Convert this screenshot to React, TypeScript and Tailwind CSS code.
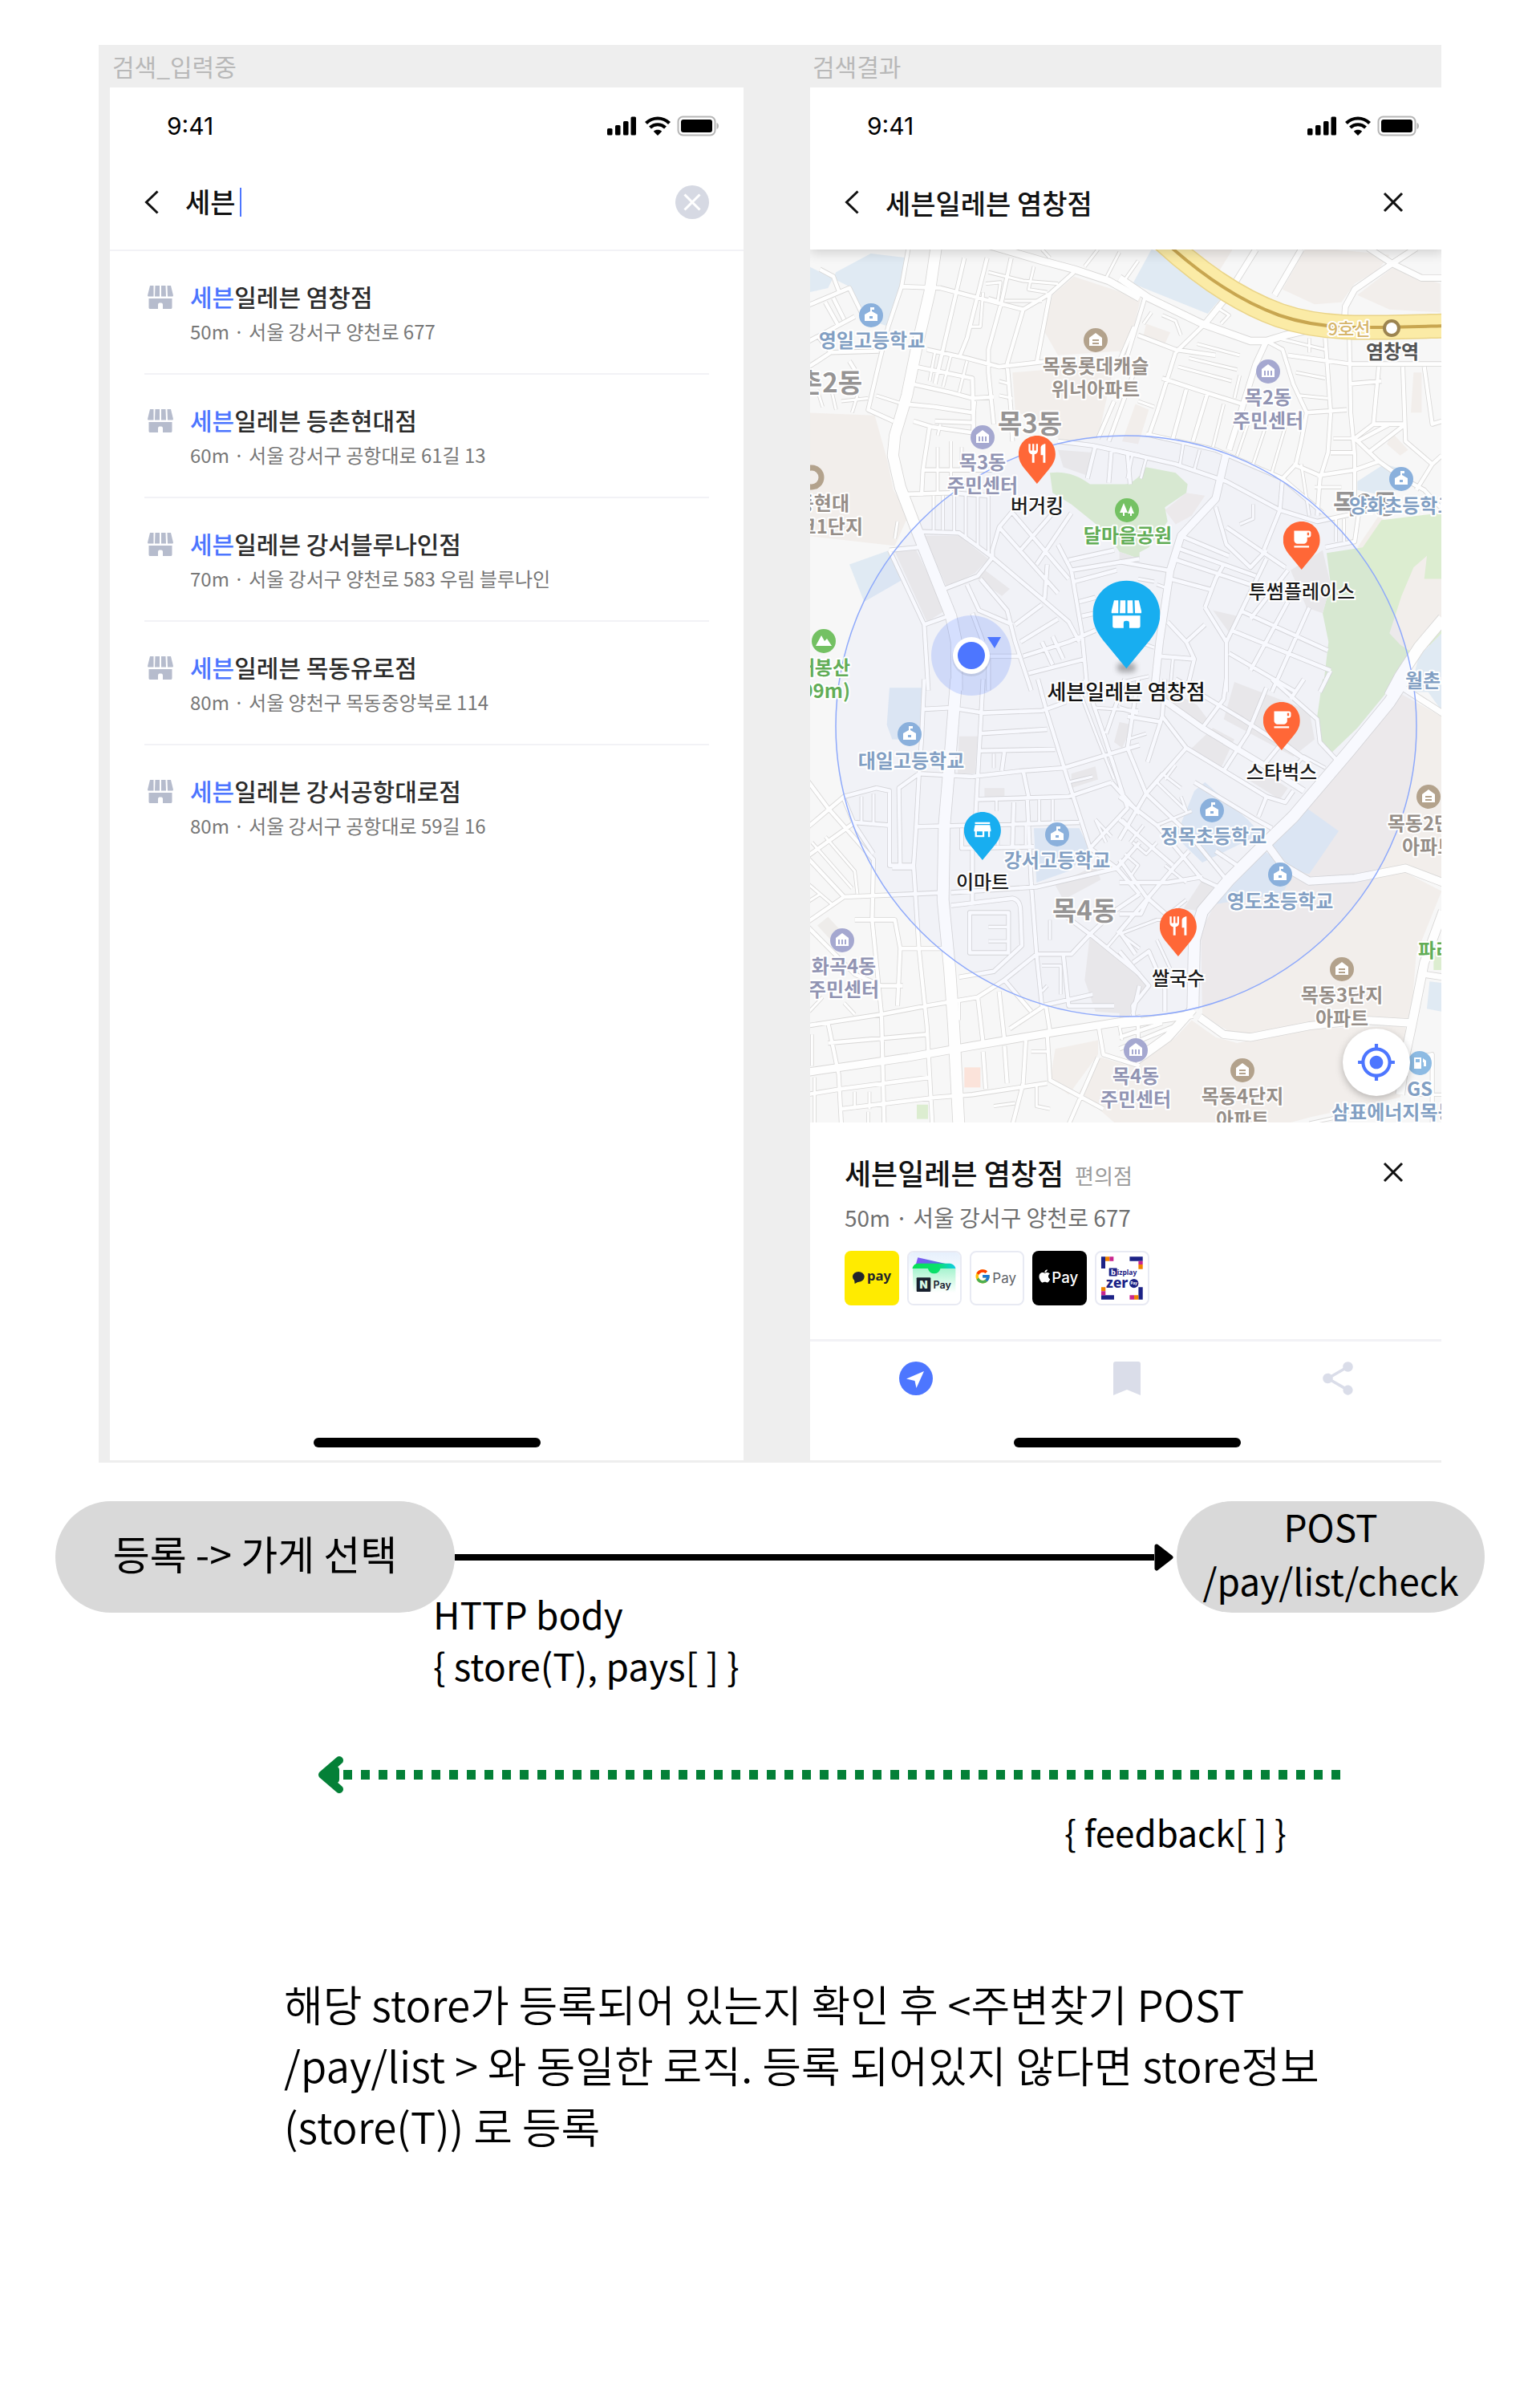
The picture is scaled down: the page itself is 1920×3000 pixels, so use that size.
import type { ReactNode } from "react";
import { FaApple } from "react-icons/fa";
import { FcGoogle } from "react-icons/fc";
import { MdLocalCafe, MdMyLocation, MdRestaurant, MdShare, MdStore } from "react-icons/md";

/* ---------- small icons ---------- */

function ShopIcon({ className }: { className: string }) {
  return (
    <svg viewBox="0 0 32 29" className={className} fill="currentColor" aria-hidden="true">
      <path d="M3 0h4.500v13.500H1c-1 0-1-1-.8-2zM9.500 0h5.500v13.500H9zM17 0h5.500l.5 13.500H17zM24.500 0H29l2.800 11.500c.2 1 .2 2-.8 2h-6z" />
      <path d="M1.500 16h29v11c0 1.500-.5 2-2 2H19v-5c0-2-1-2.500-3-2.500s-3 .5-3 2.500v5H3.500c-1.500 0-2-.5-2-2z" />
    </svg>
  );
}

function BackIcon() {
  return (
    <svg viewBox="0 0 18 30" className="h-[30px] w-[18px]" fill="none" stroke="#111" strokeWidth="3" aria-hidden="true">
      <path d="M16.500 1.500 2.500 15l14 13.500" />
    </svg>
  );
}

function CloseIcon() {
  return (
    <svg viewBox="0 0 26 26" className="h-[26px] w-[26px]" fill="none" stroke="#111" strokeWidth="3" aria-hidden="true">
      <path d="M2 2l22 22M24 2 2 24" />
    </svg>
  );
}

function StatusBar() {
  return (
    <div className="flex h-24 items-center justify-between pl-[71px] pr-[31px]">
      <span className="font-['Inter',sans-serif] text-[30px] font-normal leading-none text-black">9:41</span>
      <svg viewBox="0 0 140 26" className="h-[26px] w-[140px]" aria-hidden="true">
        <g fill="#000">
          <rect x="1" y="16" width="6.500" height="8.500" rx="1.500" />
          <rect x="11" y="12" width="6.500" height="12.500" rx="1.500" />
          <rect x="21" y="7" width="6.500" height="17.500" rx="1.500" />
          <rect x="30.500" y="1.500" width="6.500" height="23" rx="1.500" />
          <path d="M64 25l-5.200-5.300c2.900-2.500 7.500-2.500 10.400 0z" />
        </g>
        <g fill="none" stroke="#000" strokeWidth="4.200">
          <path d="M49.500 9.500c8.200-8 20.800-8 29 0" />
          <path d="M54.500 15c5.500-5 13.500-5 19 0" />
        </g>
        <rect x="89.500" y="1.500" width="46" height="23" rx="6" fill="none" stroke="#b5b5b5" strokeWidth="2" />
        <rect x="93" y="5" width="39" height="16" rx="3" fill="#000" />
        <path d="M137.500 9c2 1 2.500 2.500 2.500 4s-.5 3-2.500 4z" fill="#b5b5b5" />
      </svg>
    </div>
  );
}

function HomeIndicator() {
  return (
    <div className="mt-auto pb-4 pt-7">
      <div className="mx-auto h-3 w-[283px] rounded-full bg-black" />
    </div>
  );
}

/* ---------- search list ---------- */

const results = [
  { rest: "일레븐 염창점", info: "50m · 서울 강서구 양천로 677" },
  { rest: "일레븐 등촌현대점", info: "60m · 서울 강서구 공항대로 61길 13" },
  { rest: "일레븐 강서블루나인점", info: "70m · 서울 강서구 양천로 583 우림 블루나인" },
  { rest: "일레븐 목동유로점", info: "80m · 서울 양천구 목동중앙북로 114" },
  { rest: "일레븐 강서공항대로점", info: "80m · 서울 강서구 공항대로 59길 16" },
];

function SearchScreen() {
  return (
    <section className="flex flex-1 flex-col bg-white">
      <header className="border-b-2 border-[#f2f2f6] pb-3">
        <StatusBar />
        <form className="flex h-[94px] items-center px-[43px]" onSubmit={(e) => e.preventDefault()}>
          <button type="button" aria-label="뒤로" className="mr-[33px]">
            <BackIcon />
          </button>
          <input
            aria-label="가게 검색"
            defaultValue="세븐"
            className="w-[68px] bg-transparent p-0 pb-1 text-[34px] font-medium text-[#111] outline-none"
          />
          <span className="h-9 w-[2px] bg-[#4d76ff]" />
          <button type="reset" aria-label="지우기" className="ml-auto">
            <svg viewBox="0 0 42 42" className="h-[42px] w-[42px]" aria-hidden="true">
              <circle cx="21" cy="21" r="21" fill="#d6d9e3" />
              <path d="M11.500 11.500l19 19M30.500 11.500l-19 19" stroke="#fff" strokeWidth="3" />
            </svg>
          </button>
        </form>
      </header>
      <ul className="px-[43px]">
        {results.map((r) => (
          <li key={r.rest} className="border-b-2 border-[#f2f2f6] last:border-b-0">
            <a href="#store" className="flex gap-[21px] pb-[34px] pl-1 pt-[34px]">
              <ShopIcon className="mt-[9px] h-[29px] w-8 text-[#b6bccd]" />
              <span className="flex flex-col gap-1">
                <span className="text-[30px] font-medium leading-[44px] text-[#2b2b2b]">
                  <span className="text-[#4d76ff]">세븐</span>
                  {r.rest}
                </span>
                <span className="text-[24px] leading-9 text-[#777]">{r.info}</span>
              </span>
            </a>
          </li>
        ))}
      </ul>
      <HomeIndicator />
    </section>
  );
}

/* ---------- map ---------- */

type Tile = {
  x: number;
  y: number;
  areas: { fill: string; d: string }[];
  roads: { w: number; d: string }[];
};

const BLUE = "#e0eaf3";
const SAND = "#f2eeeb";
const GREEN = "#dcedd0";
const STONE = "#eeecea";

const tiles: Tile[] = [
  {
    x: -11,
    y: -11,
    areas: [
      { fill: BLUE, d: "M30 90L30 180 100 165 130 110 260 45 400 60 330 300 230 270 180 160z" },
      { fill: SAND, d: "M1020 125L940 190 905 310 960 400 1200 385 1265 200z" },
      { fill: SAND, d: "M790 460L1170 430 1110 690 980 700 800 590z" },
      { fill: SAND, d: "M20 600L275 610 320 760 345 870 400 960 350 1065 20 1030z" },
      { fill: STONE, d: "M460 1030L590 1030 700 1110 650 1160 545 1210z" },
      { fill: BLUE, d: "M180 1130L330 1080 375 1185 235 1260z" },
      { fill: STONE, d: "M350 1085L430 1080 540 1290 470 1330z" },
      { fill: GREEN, d: "M930 810Q1010 800 1080 850L1265 850 1265 1110 1190 1085 1130 1010 1010 920 940 880z" },
      { fill: STONE, d: "M680 1145l100 70-30 25-90-60zM960 730l140 10-30 80-90-30zM1260 1110l-70-25 0 40z" },
    ],
    roads: [
      { w: 40, d: "M505 20L480 180 430 380 395 540 350 680 343 750 370 860 440 1030 500 1170 560 1310 580 1400 582 1570" },
      { w: 24, d: "M680 10L900 70 1020 100 1150 140 1265 200" },
      {
        w: 13,
        d: "M400 30L375 160 325 300 290 430 250 590 345 630M375 160L520 165 830 240 930 185 1020 110M20 228L180 165 235 270M70 100L120 125 140 175M20 355L200 265M90 215L135 290M120 200L160 275M20 445L110 390 290 385M110 390L60 330M180 420L200 450M610 60L580 180 525 400 500 500M695 60L620 340 590 410M785 60L750 210 700 380 700 460 720 640M470 380L620 410 740 440 930 420M830 240L770 430 785 600 790 700M930 185L880 430M430 440L640 480 645 670M415 500L560 530 640 550 720 545M390 570L500 580 640 600M500 630L640 635M420 630L490 650 640 670M480 650L455 800 450 890M455 800L740 800M380 885L560 880 700 890M430 1015L590 1020 650 1060 715 1105 660 1170 535 1215M715 1105L900 1250 1000 1330 1040 1400M715 1105V1080L740 1000 830 900M740 1000L960 1230M790 950L1000 1180M820 1080L960 930M880 1130L1010 950M960 1060L1010 1150 1050 1370 1070 1570M1010 1150L1265 1110M1000 1115L1170 1080M1020 1190L1180 1150M920 1130L910 1250M1040 1260L1100 1245M1050 1310L1100 1300M620 1200L665 1290 790 1340M670 1180L770 1290 800 1400 860 1570M330 1080L460 1340 475 1570M330 1080L440 1070M460 1340L550 1310M800 1340L900 1270M820 1400L960 1320M830 1450L1000 1400 1100 1360M850 1510L1060 1460M900 1400L940 1480M940 1380L980 1460M650 1450L820 1450M700 1450V1570M640 1300L680 1400M960 700L1090 715 1265 750M1100 715L1070 830M1160 730L1150 845M1220 740L1230 850M1245 300L1190 420M1240 470L1150 700M1170 560L1110 690",
      },
      {
        w: 9,
        d: "M700 110L830 140 960 150M690 150L745 145 735 210 700 200M680 180L670 300 635 300M870 90L850 170 920 180M760 210L900 210M560 400L530 510M500 390L480 490M620 420L590 530M510 720V880M560 700V880M600 720V800M495 890V1010M530 890V1010M572 890V1020M615 890V1040M660 890V1070M700 890V1090M740 490L780 500M740 540L790 550M60 520L80 580M110 510L130 590M150 560L250 550M190 600L210 540M280 540L380 570M650 560L640 670M520 640L510 680M360 980L350 1040M930 60L900 30M1060 90L1110 30M1140 130L1190 40M1200 150L1260 70M640 740L620 790",
      },
    ],
  },
  {
    x: 389,
    y: -11,
    areas: [
      { fill: BLUE, d: "M110 30L200 60 380 190 320 255 40 150z" },
      { fill: SAND, d: "M250 20L420 20 360 110zM690 20L1000 50 960 100 870 150 820 215 720 222 600 170zM1010 95L1190 150 1190 250 1000 240 880 190zM0 140L70 200 20 390 -10 390z" },
      { fill: SAND, d: "M90 290l90 30-20 40-80-30zM50 570l50 20-40 120-60-10zM160 940L240 880 310 890 260 960 200 990zM1090 460h30v140h-40zM1010 670l60 60-30 20-50-40zM880 1070l80-110 40 30-80 90z" },
      { fill: GREEN, d: "M-10 855Q50 850 90 790L200 810 245 850 240 880 160 930 170 980 100 1070 40 1100 -10 1085z" },
      { fill: GREEN, d: "M970 975L1195 950V1400L1080 1430 990 1575H750L772 1400 750 1300 780 1200 765 1090 900 1070z" },
      { fill: SAND, d: "M1140 1100L1130 1180 1195 1180V1340L1090 1440 1040 1410 1000 1370 1045 1240 1090 1140z" },
      { fill: BLUE, d: "M880 840L980 780 1060 800 1050 860 980 890 880 870zM1195 1370V1575H1075L1110 1450z" },
      { fill: STONE, d: "M630 1150L750 1080 780 1200 750 1300 690 1280zM340 1290l90 20-20 70z" },
    ],
    roads: [
      { w: 24, d: "M-10 130L100 200 300 290 480 350 540 350 610 330 700 310" },
      { w: 20, d: "M310 290L380 210 500 30M570 190L670 30M1195 130L1120 130 1010 80 920 25M1010 80L870 170 835 230 832 270M1010 80L1100 25M540 350L500 430 400 730" },
      { w: 26, d: "M390 740L350 900 220 1030 180 1150 140 1400 120 1575" },
      { w: 40, d: "M1200 1320L1110 1420 1040 1520 1000 1590" },
      {
        w: 13,
        d: "M85 200L20 400M540 350L600 380 640 500 690 600 670 700 650 780 600 830M760 340L780 600 770 740 740 830 730 960M850 340L855 600 870 750 870 930M620 400L850 430 1195 430M850 500L970 490M690 600L840 590M960 440L940 640 870 690M1050 440L1060 700 1160 780 1195 750M1130 440L1160 640 1195 630M940 640L1060 640M870 690L960 770 1050 830 1130 870 1190 930M780 740L870 740M60 330L200 380 350 400M200 390L310 290M200 390L130 600 100 680M150 480L280 520 450 570M240 520L190 690M320 530L265 700M90 675L350 730 600 830 750 950M-10 735L200 780 390 840 590 940 730 980 880 950M600 830L590 940 530 1080M350 930L390 1060 480 1140 540 1080M390 1000L610 1140M220 1030L400 1100M190 1110L480 1200M200 1070L500 1170M310 1280L350 1180 380 1130M180 1180L340 1220M540 1110L390 1400M620 1150L480 1320M310 1280L390 1400 390 1575M440 1290L770 1430M410 1360L780 1500M400 1440L650 1575M700 1280L560 1575M620 1260L480 1500M780 1500L740 1575M170 1330L240 1400 310 1340M240 1400L270 1460 240 1575M140 1450L270 1460M-10 1120L170 1150M730 820L870 800 960 770M640 780L740 820M760 1070L870 1050 885 950M1000 640L880 700M1060 640L920 740M1160 780L1100 870",
      },
      {
        w: 9,
        d: "M150 260L200 280 220 330M110 250L80 290M350 230L400 260 370 290M280 360L440 400M250 410L430 450M210 440L410 490M650 460L760 480M660 540L770 550M700 340V390M790 690L860 690M40 740L20 830M90 760L70 830M230 700L215 790M290 730L270 800M470 640L430 750M540 640L490 780M610 650L560 810M670 780L700 960M720 860L820 860M440 470L420 550M60 560L120 580M380 570L340 720M490 920L490 970 440 990M800 970V1050M830 970V1050M130 1200L160 1210M60 1180L120 1190M130 1470V1560M190 1460L180 1560M580 340L760 380M60 1400L120 1420M0 1540L100 1520",
      },
    ],
  },
  {
    x: -11,
    y: 539,
    areas: [
      { fill: BLUE, d: "M330 20L450 20 455 200 340 200 320 150zM870 510L1040 510 1080 590 1000 660 880 700z" },
      { fill: STONE, d: "M590 190h70l-10 130h-65zM685 370h75v35h-75zM950 710L1100 640 1120 690 980 760zM1080 880L1140 930 1265 1020 1250 1160 1100 1150 1060 1040zM1010 320l90-25 10 45-100 30zM60 850l40-30 50 50-30 40zM1190 140l50 10-40 80-30-20z" },
      { fill: SAND, d: "M950 1280L1110 1250 1110 1300 1000 1440 930 1390zM1120 1310L1265 1350V1545H1180L1040 1430z" },
      { fill: "#fbe3da", d: "M610 1345h60v70h-60z" },
      { fill: GREEN, d: "M432 1475h42v50h-42z" },
    ],
    roads: [
      { w: 42, d: "M580 -10L555 280 535 500 530 760 555 1000 570 1200 590 1560" },
      { w: 26, d: "M20 1362L400 1310 640 1270 960 1220 1270 1175" },
      {
        w: 13,
        d: "M460 95L560 90 680 108 900 100 990 70M460 -10L450 200 440 330 430 500 420 640 440 930 470 1200 490 1545M680 -10L660 330 650 500M670 180L920 165M670 240L950 235M440 320L640 330 830 310 980 300 1265 220M885 -10L920 110 1000 350 1080 580 1180 650 1265 740M760 240L750 310M830 310L850 400M650 410L1000 400 1160 350M795 420L790 570M845 400L860 700 880 950 900 1130M650 500L1040 490M430 505L650 500M600 510V580L870 575M640 580L640 780M560 735L880 715 950 700 1180 650 1265 560M560 780L790 755Q820 760 820 800L825 920 720 1010 590 1030M630 805H775V945H630zM880 950L1010 950 1080 880 1170 800 1265 740M950 790L1080 880 1265 1020M1080 580L1220 440 1130 180 1060 -10M1210 -10L1140 180M1160 350L1265 460M880 950L760 1040 660 1100 470 1130 300 1160 20 1200M760 1040L860 1150M740 1080L760 1250M660 1100L680 1260M900 1130L1090 1090M910 1130L780 1210M915 1130L930 1220M980 950L1000 1130 1170 1130M20 840L160 750 420 740 530 735M160 750L20 610M20 510L160 400 280 370 330 380V640H420M370 640L365 370 440 320M20 340L100 440 270 620 265 830 300 1160 310 1545M20 610L200 490 330 500M160 410L200 500 270 600M200 830L350 830 370 930 530 930M20 850L200 1020 300 1060 380 1060M370 930L360 1130M100 1190L140 1370 150 1545M100 1260L470 1230M150 1420L480 1380M150 1490L500 1450 640 1440 920 1400M20 1440L150 1420M680 1290L690 1420M760 1270L770 1400M840 1250L830 1400 790 1545M920 1230L930 1390 1130 1490M1110 1190L1130 1300 1265 1340M1110 1310L1000 1545M1265 1060L1240 1160",
      },
      {
        w: 9,
        d: "M225 400V490M270 390V490M720 250V300M890 410V490M940 410V490M730 410V450M735 500V570M700 855H770M700 905H770M40 560L190 720M90 540L200 660 210 740M20 700L120 780M20 770L70 740M340 650H420M840 500V570M1000 350L1090 330M1100 90L1260 100M1040 30L1110 200 1170 340M1100 480L1160 540M1140 560L1100 480M1200 480L1265 540M900 990H970V1090M920 1060L900 1080M590 1110V1180M40 1230V1340M30 1150L80 1100M50 1380V1540M200 1430V1490M255 1430V1490M250 1500V1540M880 1400V1480L930 1490M1190 1200L1200 1250M720 1480L800 1470M930 830V900M1180 870L1265 930M1230 830L1140 930M860 1290H920M160 1120L200 1160",
      },
    ],
  },
  {
    x: 389,
    y: 539,
    areas: [
      { fill: GREEN, d: "M750 -10H1030L880 160 780 250 740 200 728 130zM1165 940L1195 900V1005H1165zM1190 820v60z" },
      { fill: SAND, d: "M1040 40L1195 120V690L1060 650 870 680 720 700 640 660 550 560z" },
      { fill: SAND, d: "M520 580L600 640 720 710 1060 665 1195 730 1100 950 1080 1180 900 1190 700 1190 480 1240 400 1220 300 1160 295 870 350 770z" },
      { fill: SAND, d: "M260 1180L350 1240 430 1260 700 1210 1060 1200V1320L1040 1450 700 1520 600 1545H-10L60 1330 200 1240z" },
      { fill: BLUE, d: "M550 560L690 440 810 520 700 670 640 660zM520 580L640 665 600 740 350 775 400 690zM270 380L310 350 470 480 520 530 300 630 200 540zM1110 -10H1195V100zM1150 1045L1195 1050V1150L1140 1140z" },
      { fill: STONE, d: "M160 20L280 80 320 130 300 150 150 60zM340 160L420 200 370 300 250 240zM420 0L700 100 720 200 640 260 380 130zM490 290L620 370 590 410 470 340zM300 690L350 720 290 800 230 790zM-10 960L100 1060 30 1120 30 1180H-10z" },
    ],
    roads: [
      { w: 42, d: "M1070 -30L1000 70 850 240 640 470 540 560 400 690 300 800 270 900 265 1140" },
      { w: 26, d: "M545 570L600 640 700 695 870 685 1060 650 1200 700M290 1170L380 1230 480 1240 700 1200 900 1180 1080 1190M-10 1195L120 1180 265 1160" },
      { w: 32, d: "M1200 800L1130 980 1085 1190 1060 1300 1040 1440M265 1140L170 1240 50 1320" },
      { w: 20, d: "M1050 20L1200 110M1130 1020L1200 1030M150 60L300 160 530 290 680 380" },
      {
        w: 13,
        d: "M60 -10L20 230 90 390M160 -10L150 120 95 280M150 120L240 230 90 390M300 160L380 60 390 -10M380 310L470 180 540 20M240 230L540 400 510 470M200 -10L450 130 700 280M560 -10L730 130 740 210 800 270M630 60L680 -10M90 390L-10 550M90 390L250 530 390 690M-10 400L130 500 300 690 370 720M-10 480L190 640M270 350L500 480 560 510M100 750L200 640 250 590M-10 620L90 750 200 840M-10 700L170 700 300 680M-10 810H70L100 750M100 750L-10 870 50 950M40 980L100 940 160 1070V1150M-10 940L100 1060 40 1130 45 1190M350 590L430 640M20 120L150 140M-10 90L60 110M530 290L600 210 700 280M540 400L610 420 640 380M60 1180V1280M-10 1240L150 1190M-10 1280L200 1200M1060 1320L1160 1300V1545",
      },
      {
        w: 9,
        d: "M130 350L240 450 220 400M95 380L150 320 220 370M260 450L130 500M40 560L90 600 130 560M10 600L60 640 30 680M-10 880L130 830 260 830M160 820L240 760M130 900L180 1000M90 180L20 200M200 290L160 340M640 300L680 260 760 300M160 640L240 700M80 500L30 560M700 1540L1000 1480M1080 1440H1195",
      },
    ],
  },
];

function TileLayer({ tile, children }: { tile: Tile; children: ReactNode }) {
  return (
    <svg x={tile.x} y={tile.y} width="420" height="560" viewBox="0 0 1260 1568" preserveAspectRatio="none" overflow="visible">
      {children}
    </svg>
  );
}

type Kind = "school" | "office" | "home" | "park" | "hill" | "gas";

const kindColor: Record<Kind, string> = {
  school: "#8ab0dc",
  office: "#a5a8d0",
  home: "#b3a28c",
  park: "#74c163",
  hill: "#74c163",
  gas: "#8dbbe3",
};

const kindText: Record<Kind, string> = {
  school: "#829fc3",
  office: "#9194b3",
  home: "#968e88",
  park: "#62ad57",
  hill: "#62ad57",
  gas: "#829fc3",
};

const kindGlyph: Record<Kind, string> = {
  school: "M-8-1L-1-5V-10H4V-7H1V-5L8-1V7H-8zM-2 1V4H2V1z",
  office: "M0-9L8-3V7H-8V-3zM-5-1V5H-3V-1zM-1-1V5H1V-1zM3-1V5H5V-1z",
  home: "M0-9L8-3V7H-8V-3zM-4-1V1H4V-1zM-4 3V5H4V3z",
  park: "M-4-9L1 3H-3V7H-5V3H-9zM5-6L9 4H6V7H4V4H1z",
  hill: "M-10 6L-3-7 1 0 4-3 10 6z",
  gas: "M-7-7H2V7H-7zM-5-5V-1H0V-5zM4-6L8-3V4H5V-1H4z",
};

type Place = { kind: Kind; x: number; y: number; tx: number; ty: number; lines: string[]; anchor?: "start" | "middle" | "end" };

const places: Place[] = [
  { kind: "school", x: 76, y: 82, tx: 77, ty: 122, lines: ["영일고등학교"] },
  { kind: "home", x: 356, y: 113, tx: 356, ty: 154, lines: ["목동롯데캐슬", "위너아파트"] },
  { kind: "office", x: 215, y: 234, tx: 215, ty: 274, lines: ["목3동", "주민센터"] },
  { kind: "park", x: 395, y: 325, tx: 396, ty: 365, lines: ["달마을공원"] },
  { kind: "office", x: 571, y: 152, tx: 571, ty: 193, lines: ["목2동", "주민센터"] },
  { kind: "school", x: 737, y: 286, tx: 672, ty: 328, lines: ["양화초등학교"], anchor: "start" },
  { kind: "hill", x: 17, y: 488, tx: 50, ty: 530, lines: ["매봉산", "(99m)"], anchor: "end" },
  { kind: "school", x: 124, y: 604, tx: 126, ty: 646, lines: ["대일고등학교"] },
  { kind: "school", x: 308, y: 729, tx: 308, ty: 770, lines: ["강서고등학교"] },
  { kind: "office", x: 40, y: 861, tx: 42, ty: 902, lines: ["화곡4동", "주민센터"] },
  { kind: "school", x: 501, y: 699, tx: 503, ty: 740, lines: ["정목초등학교"] },
  { kind: "school", x: 586, y: 779, tx: 586, ty: 821, lines: ["영도초등학교"] },
  { kind: "home", x: 771, y: 682, tx: 771, ty: 724, lines: ["목동2단지", "아파트"] },
  { kind: "home", x: 663, y: 897, tx: 663, ty: 938, lines: ["목동3단지", "아파트"] },
  { kind: "home", x: 539, y: 1023, tx: 539, ty: 1064, lines: ["목동4단지", "아파트"] },
  { kind: "office", x: 406, y: 998, tx: 406, ty: 1039, lines: ["목4동", "주민센터"] },
  { kind: "gas", x: 760, y: 1014, tx: 760, ty: 1055, lines: ["GS"] },
];

const expressway = "M440 -12C480 25 530 62 585 82C640 101 690 98 795 95";

function MapDrawing() {
  return (
    <svg viewBox="0 0 790 1088" className="block h-full w-full font-['Noto_Sans_CJK_KR',sans-serif]" aria-label="지도">
      <rect width="790" height="1088" fill="#f7f7f7" />
      {tiles.map((t, i) => (
        <TileLayer key={i} tile={t}>
          {t.areas.map((a) => (
            <path key={a.d} d={a.d} fill={a.fill} />
          ))}
        </TileLayer>
      ))}
      {tiles.map((t, i) => (
        <TileLayer key={i} tile={t}>
          {t.roads.map((r) => (
            <path key={r.d} d={r.d} fill="none" stroke="#d8d7d6" strokeWidth={r.w + 5} strokeLinejoin="round" />
          ))}
        </TileLayer>
      ))}
      {tiles.map((t, i) => (
        <TileLayer key={i} tile={t}>
          {t.roads.map((r) => (
            <path key={r.d} d={r.d} fill="none" stroke="#fefefe" strokeWidth={r.w} strokeLinejoin="round" />
          ))}
        </TileLayer>
      ))}
      <g fill="none">
        <path d={expressway} stroke="#ead488" strokeWidth="31" />
        <path d={expressway} stroke="#fbeba6" strokeWidth="28" />
        <path d={expressway} stroke="#c8a650" strokeWidth="4" />
        <circle cx="725" cy="98" r="9" fill="#fff" stroke="#9c8450" strokeWidth="4" />
      </g>
      <circle cx="394" cy="594" r="362" fill="#4d76ff" fillOpacity=".035" stroke="#8ea9fb" strokeWidth="1.500" />

      <g fontSize="24" fontWeight="700" stroke="#fff" strokeWidth="4" strokeLinejoin="round" paintOrder="stroke" textAnchor="middle">
        <g fontSize="33" fill="#969494">
          <text x="65" y="178" textAnchor="end">등촌2동</text>
          <text x="274" y="229">목3동</text>
          <text x="692" y="329">목2동</text>
          <text x="342" y="836">목4동</text>
        </g>
        {places.map((p) => (
          <g key={p.lines.join() + p.x}>
            <circle cx={p.x} cy={p.y} r="15" fill={kindColor[p.kind]} stroke="none" />
            <path d={kindGlyph[p.kind]} transform={`translate(${p.x} ${p.y})`} fill="#fff" fillRule="evenodd" stroke="none" />
            {p.lines.map((line, i) => (
              <text key={line} x={p.tx} y={p.ty + i * 29} textAnchor={p.anchor ?? "middle"} fill={kindText[p.kind]}>
                {line}
              </text>
            ))}
          </g>
        ))}
        <circle cx="2" cy="284" r="12" fill="none" stroke="#b3a28c" strokeWidth="7" />
        <g textAnchor="end" fill="#968e88">
          <text x="49" y="325">목동현대</text>
          <text x="66" y="354">파크1단지</text>
        </g>
        <g textAnchor="start" fill="#829fc3">
          <text x="742" y="546">월촌</text>
          <text x="650" y="1084">삼표에너지목동</text>
        </g>
        <text x="758" y="882" textAnchor="start" fill="#62ad57">파리</text>
        <text x="672" y="107" fontSize="22" fontWeight="500" fill="#d6b56a">9호선</text>
        <text x="726" y="136" fill="#555">염창역</text>
      </g>

      <circle cx="201" cy="506" r="50" fill="#4d76ff" fillOpacity=".2" />
      <circle cx="201" cy="508" r="24" fill="#000" fillOpacity=".08" />
      <circle cx="201" cy="506" r="23" fill="#fff" />
      <circle cx="201" cy="506" r="17" fill="#4d76ff" />
      <path d="M221 483H238L230 497z" fill="#4d76ff" />
    </svg>
  );
}

function PinShape({ color, children }: { color: string; children?: ReactNode }) {
  return (
    <svg viewBox="0 0 46 60" className="h-full w-full" aria-hidden="true">
      <path d="M23 0C10 0 0 10 0 23C0 31 4 37 9 43L23 60L37 43C42 37 46 31 46 23C46 10 36 0 23 0z" fill={color} />
      {children}
    </svg>
  );
}

const pins = [
  { name: "버거킹", x: 283, y: 232, color: "#ff6737", Icon: MdRestaurant },
  { name: "투썸플레이스", x: 613, y: 339, color: "#ff6737", Icon: MdLocalCafe },
  { name: "스타벅스", x: 588, y: 564, color: "#ff6737", Icon: MdLocalCafe },
  { name: "쌀국수", x: 459, y: 821, color: "#ff6737", Icon: MdRestaurant },
  { name: "이마트", x: 215, y: 701, color: "#18aef0", Icon: MdStore },
];

function at(x: number, y: number) {
  return { left: `${(x / 790) * 100}%`, top: `${(y / 1088) * 100}%` };
}

function MapView() {
  return (
    <div className="relative aspect-[790/1088] overflow-hidden">
      <MapDrawing />
      {pins.map(({ name, x, y, color, Icon }) => (
        <button key={name} type="button" style={at(x, y)} className="absolute flex -translate-x-1/2 flex-col items-center gap-[14px]">
          <span className="h-[60px] w-[46px]">
            <PinShape color={color}>
              <Icon x="9" y="8" size={28} color="#fff" />
            </PinShape>
          </span>
          <span className="whitespace-nowrap text-[24px] font-medium leading-6 text-[#1a1a1a] [paint-order:stroke_fill] [-webkit-text-stroke:4px_#fff]">
            {name}
          </span>
        </button>
      ))}
      <button type="button" style={at(394, 412)} className="absolute flex -translate-x-1/2 flex-col items-center gap-[14px]">
        <span className="relative h-[111px] w-[84px]">
          <span className="absolute -bottom-1 left-1/2 h-3 w-6 -translate-x-1/2 rounded-full bg-black/30 blur-[3px]" />
          <span className="absolute inset-0">
            <PinShape color="#18aef0" />
          </span>
          <ShopIcon className="absolute left-1/2 top-[25px] h-[35px] w-[38px] -translate-x-1/2 text-white" />
        </span>
        <span className="whitespace-nowrap text-[26px] font-medium leading-[26px] text-[#111] [paint-order:stroke_fill] [-webkit-text-stroke:4px_#fff]">
          세븐일레븐 염창점
        </span>
      </button>
      <button
        type="button"
        aria-label="내 위치"
        style={at(706, 1013)}
        className="absolute flex size-[84px] -translate-x-1/2 -translate-y-1/2 items-center justify-center rounded-full bg-white shadow-[0_3px_10px_rgba(0,0,0,0.25)]"
      >
        <MdMyLocation className="size-[50px] text-[#4d76ff]" />
      </button>
    </div>
  );
}

/* ---------- payment marks ---------- */

function KakaoPay() {
  return (
    <svg viewBox="0 0 204 204" className="size-[68px] rounded-[8px] bg-[#ffeb00]" role="img" aria-label="카카오페이">
      <ellipse cx="52" cy="97" rx="22" ry="19" fill="#22252b" />
      <path d="M36 104l2 19 18-10z" fill="#22252b" />
      <text x="84" y="111" fontFamily="Noto Sans, sans-serif" fontWeight="700" fontSize="50" fill="#22252b">pay</text>
    </svg>
  );
}

function NaverPay() {
  return (
    <svg viewBox="0 0 204 204" className="size-[68px] rounded-[8px] border-2 border-[#e8eaf3] bg-white" role="img" aria-label="네이버페이">
      <defs>
        <linearGradient id="nv-sky" x2="0" y2="1">
          <stop offset="0" stopColor="#e6f0fc" />
          <stop offset=".5" stopColor="#fff" />
        </linearGradient>
        <linearGradient id="nv-flap">
          <stop offset="0" stopColor="#06e056" />
          <stop offset=".6" stopColor="#0ae06e" />
          <stop offset="1" stopColor="#0fcbe8" />
        </linearGradient>
        <linearGradient id="nv-body" x2="0" y2="1">
          <stop offset="0" stopColor="#7ff0b8" />
          <stop offset="1" stopColor="#fff" />
        </linearGradient>
        <linearGradient id="nv-card">
          <stop offset="0" stopColor="#8259f5" />
          <stop offset="1" stopColor="#4a78d8" />
        </linearGradient>
      </defs>
      <rect width="204" height="204" fill="url(#nv-sky)" />
      <path d="M16 60H186V160H16z" fill="url(#nv-body)" opacity=".7" />
      <path d="M36 20L160 48H28z" fill="url(#nv-card)" />
      <path d="M14 64Q20 44 36 44H164Q182 46 186 64H126Q120 84 101 84Q82 84 76 64z" fill="url(#nv-flap)" />
      <rect x="31" y="100" width="56" height="56" rx="3" fill="#18202e" />
      <text x="59" y="143" textAnchor="middle" fontFamily="Inter, sans-serif" fontWeight="900" fontSize="42" fill="#d8f8e6">N</text>
      <text x="97" y="145" fontFamily="Inter, sans-serif" fontWeight="600" fontSize="40" fill="#18202e">Pay</text>
    </svg>
  );
}

function GooglePay() {
  return (
    <svg viewBox="0 0 204 204" className="size-[68px] rounded-[8px] border-2 border-[#e8eaf3] bg-white" role="img" aria-label="구글페이">
      <FcGoogle x="12" y="62" size={66} />
      <text x="84" y="122" fontFamily="Inter, sans-serif" fontSize="54" fill="#5f6368">Pay</text>
    </svg>
  );
}

function ApplePay() {
  return (
    <svg viewBox="0 0 204 204" className="size-[68px] rounded-[8px] bg-black" role="img" aria-label="애플페이">
      <FaApple x="18" y="66" size={56} color="#fff" />
      <text x="73" y="121" fontFamily="Inter, sans-serif" fontWeight="500" fontSize="56" fill="#fff">Pay</text>
    </svg>
  );
}

function ZeroPay() {
  return (
    <svg viewBox="0 0 204 204" className="size-[68px] rounded-[8px] border-2 border-[#e8eaf3] bg-white" role="img" aria-label="비즈플레이 제로페이">
      <g fill="#1c2286">
        <path d="M19 17H35V64H19zM132 17H184V34H132zM19 170H70V187H19zM167 138H184V187H167z" />
        <rect x="50" y="62" width="32" height="32" rx="2" />
      </g>
      <path d="M35 17H52V34H35zM167 48H184V66H167zM19 138H36V154H19zM150 170H167V187H150z" fill="#f08300" />
      <path d="M52 17H68V34H52zM167 34H184V48H167zM19 154H36V170H19zM132 170H150V187H132z" fill="#c9268f" />
      <text x="57" y="89" fontFamily="Noto Sans, sans-serif" fontWeight="700" fontSize="30" fill="#fff">b</text>
      <text x="82" y="88" fontFamily="Noto Sans, sans-serif" fontWeight="700" fontSize="27" fill="#1c2286">izplay</text>
      <text x="38" y="139" fontFamily="Noto Sans, sans-serif" fontWeight="800" fontSize="56" fill="#1c2286">zer</text>
      <circle cx="149" cy="123" r="18" fill="#1c2286" />
      <text x="149" y="129" textAnchor="middle" fontFamily="Noto Sans, sans-serif" fontWeight="700" fontSize="15" fill="#fff">Pay</text>
    </svg>
  );
}

/* ---------- result screen ---------- */

function ResultScreen() {
  return (
    <section className="-mr-[3px] flex flex-1 flex-col overflow-hidden bg-white">
      <header className="relative z-10 bg-white pb-3 shadow-[0_4px_14px_rgba(0,0,0,0.16)]">
        <StatusBar />
        <div className="flex h-[94px] items-center pl-[43px] pr-[50px]">
          <button type="button" aria-label="뒤로" className="mr-[33px]">
            <BackIcon />
          </button>
          <h2 className="text-[34px] font-medium text-[#111]">세븐일레븐 염창점</h2>
          <button type="button" aria-label="닫기" className="ml-auto">
            <CloseIcon />
          </button>
        </div>
      </header>
      <MapView />
      <div className="border-b-[3px] border-[#f2f2f6] pb-[42px] pl-[43px] pr-[50px] pt-9">
        <div className="flex items-center">
          <h3 className="text-[36px] font-medium leading-[52px] text-[#111]">세븐일레븐 염창점</h3>
          <span className="ml-[14px] mt-2 text-[26px] leading-9 text-[#9b9b9b]">편의점</span>
          <button type="button" aria-label="닫기" className="ml-auto">
            <CloseIcon />
          </button>
        </div>
        <p className="mt-[10px] text-[28px] leading-10 text-[#6f6f6f]">50m · 서울 강서구 양천로 677</p>
        <div className="mt-[22px] flex gap-[10px]">
          <KakaoPay />
          <NaverPay />
          <GooglePay />
          <ApplePay />
          <ZeroPay />
        </div>
      </div>
      <nav className="grid h-[92px] grid-cols-3 place-items-center">
        <button type="button" aria-label="길찾기">
          <svg viewBox="0 0 42 42" className="size-[42px]" aria-hidden="true">
            <circle cx="21" cy="21" r="21" fill="#4d76ff" />
            <path d="M31 12L21.500 33 19.500 24 9 21.500z" fill="#fff" />
          </svg>
        </button>
        <button type="button" aria-label="저장">
          <svg viewBox="0 0 34 42" className="h-[42px] w-[34px]" aria-hidden="true">
            <path d="M3 0H31Q34 0 34 3V42L17 35 0 42V3Q0 0 3 0z" fill="#dadde9" />
          </svg>
        </button>
        <button type="button" aria-label="공유">
          <MdShare className="size-[50px] text-[#dadde9]" />
        </button>
      </nav>
      <HomeIndicator />
    </section>
  );
}

/* ---------- page ---------- */

export default function App() {
  return (
    <main className="min-h-screen overflow-hidden bg-white pt-14 font-['Noto_Sans_CJK_KR',sans-serif] text-black">
      <div className="mx-[123px] grid grid-cols-[790fr_787fr] gap-x-[83px] overflow-hidden bg-[#eeeeee] pb-[3px] pl-[14px]">
        <div className="flex flex-col">
          <h1 className="pl-[3px] text-[30px] leading-[53px] text-[#b8b8b8]">검색_입력중</h1>
          <SearchScreen />
        </div>
        <div className="flex flex-col">
          <h1 className="pl-[3px] text-[30px] leading-[53px] text-[#b8b8b8]">검색결과</h1>
          <ResultScreen />
        </div>
      </div>

      <section className="mt-12 flex items-center px-[69px]">
        <div className="flex h-[139px] w-[498px] items-center justify-center rounded-full bg-[#d9d9d9] pb-[10px] text-[50px]">
          등록 -&gt; 가게 선택
        </div>
        <div className="flex flex-1 items-center pr-1">
          <div className="h-2 flex-1 bg-black" />
          <svg viewBox="0 0 24 34" className="h-[34px] w-6" aria-hidden="true">
            <path d="M3 3L21 17 3 31z" stroke="#000" strokeWidth="5" strokeLinejoin="round" />
          </svg>
        </div>
        <div className="flex h-[139px] w-[384px] items-center justify-center rounded-full bg-[#d9d9d9] pb-[10px] text-center text-[46px] leading-[67px]">
          POST
          <br />
          /pay/list/check
        </div>
      </section>

      <p className="-mt-[31px] ml-[540px] text-[46px] leading-[64px]">
        HTTP body
        <br />
        {"{ store(T), pays[ ] }"}
      </p>

      <div className="ml-[395px] mr-[248px] mt-[82px] flex items-center">
        <svg viewBox="0 0 33 46" className="h-[46px] w-[33px]" aria-hidden="true">
          <path d="M28 5L7 23 28 41M23 17V29L14 23z" fill="none" stroke="#048037" strokeWidth="10" strokeLinecap="round" strokeLinejoin="round" />
        </svg>
        <div className="h-3 flex-1 bg-[repeating-linear-gradient(to_right,#048037_0_11px,transparent_11px_22px)]" />
      </div>

      <p className="mr-[316px] mt-4 text-right text-[44px] leading-[64px]">{"{ feedback[ ] }"}</p>

      <p className="ml-[354px] mt-36 text-[53px] font-[350] leading-[76px]">
        해당 store가 등록되어 있는지 확인 후 &lt;주변찾기 POST
        <br />
        /pay/list &gt; 와 동일한 로직. 등록 되어있지 않다면 store정보
        <br />
        (store(T)) 로 등록
      </p>
    </main>
  );
}
